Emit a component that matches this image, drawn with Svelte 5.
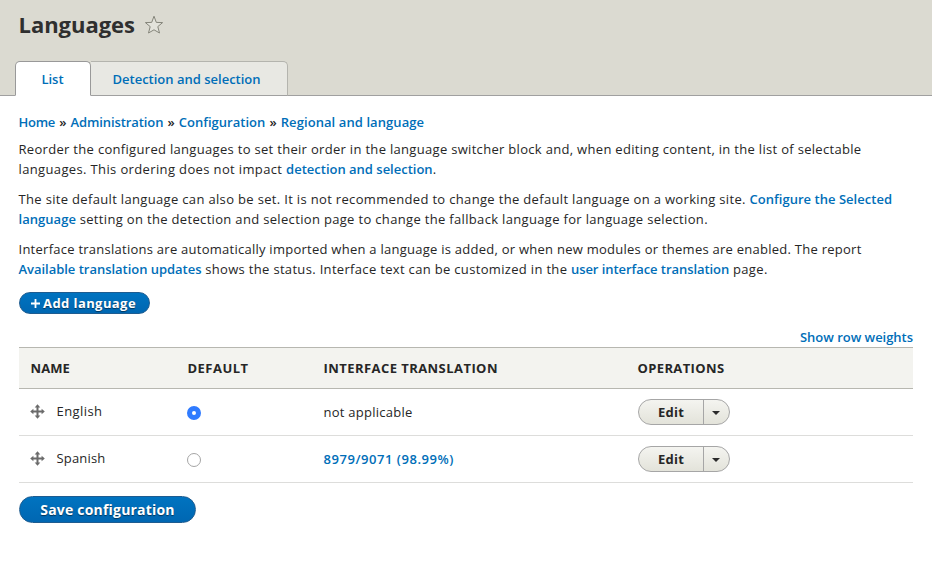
<script>
  const crumbs = [
    { text: 'Home', track: -0.274 },
    { text: 'Administration', track: -0.084 },
    { text: 'Configuration', track: 0.013 },
    { text: 'Regional and language', track: 0.083 }
  ];

  // Each paragraph is a list of lines; each line is a list of runs.
  const help = [
    [
      [{ text: 'Reorder the configured languages to set their order in the language switcher block and, when editing content, in the list of selectable', track: 0.309 }],
      [
        { text: 'languages. This ordering does not impact ', track: 0.365 },
        { text: 'detection and selection', track: -0.005, link: true },
        { text: '.', track: 0 }
      ]
    ],
    [
      [
        { text: 'The site default language can also be set. It is not recommended to change the default language on a working site. ', track: 0.332 },
        { text: 'Configure the Selected', track: 0.027, link: true }
      ],
      [
        { text: 'language', track: 0.047, link: true },
        { text: ' setting on the detection and selection page to change the fallback language for language selection.', track: 0.33 }
      ]
    ],
    [
      [{ text: 'Interface translations are automatically imported when a language is added, or when new modules or themes are enabled. The report', track: 0.255 }],
      [
        { text: 'Available translation updates', track: -0.027, link: true },
        { text: ' shows the status. Interface text can be customized in the ', track: 0.325 },
        { text: 'user interface translation', track: -0.06, link: true },
        { text: ' page.', track: 0.37 }
      ]
    ]
  ];

  const rows = [
    { name: 'English', track: 0.431, status: 'not applicable' },
    { name: 'Spanish', track: 0.182, status: '8979/9071 (98.99%)', link: true }
  ];

  let selected = $state('English');
</script>

<header>
  <div class="title">
    <h1>Languages</h1>
    <svg class="star" width="20" height="20" viewBox="0 0 20 20">
      <path d="M10 1.2 12.3 7.4 18.6 7.6 13.8 11.6 15.5 18 10 14.8 4.5 18 6.2 11.6 1.4 7.6 7.7 7.4Z" fill="#e3e3db" stroke="#85857a" stroke-linejoin="round" />
    </svg>
  </div>
  <nav class="tabs">
    <a class="tab active" href="#list">List</a>
    <a class="tab second" href="#detection">Detection and selection</a>
  </nav>
</header>

<main>
  <nav class="crumbs">
    {#each crumbs as crumb, i}
      {#if i}<span class="sep">»</span>{/if}
      <a href="#top" style="letter-spacing: {crumb.track}px">{crumb.text}</a>
    {/each}
  </nav>

  {#each help as lines}
    <p>
      {#each lines as line}
        <span class="line">{#each line as run}{#if run.link}<a href="#top" style="letter-spacing: {run.track}px">{run.text}</a>{:else}<span style="letter-spacing: {run.track}px">{run.text}</span>{/if}{/each}</span>
      {/each}
    </p>
  {/each}

  <button class="primary add">
    <svg width="9" height="9" viewBox="0 0 9 9"><path d="M4.5 0V9M0 4.5H9" stroke="#fff" stroke-width="1.8" /></svg>
    <span>Add language</span>
  </button>

  <div class="weights"><a href="#weights">Show row weights</a></div>

  <div class="table">
    <div class="row head">
      <span class="h1">Name</span>
      <span class="h2">Default</span>
      <span class="h3">Interface translation</span>
      <span class="h4">Operations</span>
    </div>
    {#each rows as row}
      <div class="row">
        <div class="name">
          <svg width="15" height="15" viewBox="0 0 15 15">
            <path d="M7.5 2V13M2 7.5H13" stroke="#6b6b6b" stroke-width="2" />
            <path d="M7.5 .2 10.3 3.4H4.7ZM7.5 14.8 10.3 11.6H4.7ZM.2 7.5 3.4 4.7V10.3ZM14.8 7.5 11.6 4.7V10.3Z" fill="#6b6b6b" />
          </svg>
          <span style="letter-spacing: {row.track}px">{row.name}</span>
        </div>
        <div class="pick">
          <button class="radio" class:on={selected === row.name} aria-label={row.name} onclick={() => (selected = row.name)}></button>
        </div>
        <div class="status">
          {#if row.link}<a href="#translate">{row.status}</a>{:else}{row.status}{/if}
        </div>
        <div class="ops">
          <div class="drop">
            <span class="edit">Edit</span>
            <span class="toggle"><svg width="8" height="4" viewBox="0 0 8 4"><path d="M0 0H8L4 4Z" fill="#2b2b2b" /></svg></span>
          </div>
        </div>
      </div>
    {/each}
  </div>

  <button class="primary save">Save configuration</button>
</main>

<style>
  :global(body) {
    background: #fff;
    color: #262626;
    font: 13px/20px 'Open Sans', 'Noto Sans', sans-serif;
  }
  header {
    box-sizing: border-box;
    height: 96px;
    padding: 10px 15px 0;
    display: flex;
    flex-direction: column;
    justify-content: space-between;
    background: #dbdad1;
    border-bottom: 1px solid #a0a0a0;
  }
  .title {
    display: flex;
    align-items: center;
    gap: 9px;
    height: 30px;
    padding-left: 4px;
  }
  h1 {
    margin: -2px 0 0 -0.5px;
    font-size: 22px;
    line-height: 30px;
    letter-spacing: -0.03px;
    color: #2f2f2f;
  }
  a {
    color: #006eb8;
    font-weight: 600;
    text-decoration: none;
  }
  .tabs {
    display: flex;
    height: 35px;
    margin-bottom: -1px;
  }
  .tab {
    box-sizing: border-box;
    border: 1px solid #b4b4ae;
    border-left: 0;
    border-bottom-color: #a0a0a0;
    border-radius: 0 5px 0 0;
    background: #e8e8e3;
    line-height: 34px;
    height: 35px;
  }
  .active {
    width: 76px;
    padding-right: 1px;
    text-align: center;
    background: #fff;
    border: 1px solid #999;
    border-bottom-color: #fff;
    border-radius: 5px 5px 0 0;
  }
  .second {
    padding: 0 26.5px 0 21.5px;
  }
  main {
    padding: 16px 19px 0 18.5px;
  }
  .crumbs {
    display: flex;
    gap: 4.2px;
    height: 20px;
    margin-bottom: 7px;
  }
  .sep {
    width: 7px;
    text-align: center;
    font-weight: 600;
  }
  p {
    margin: 0 0 10px;
  }
  .line {
    display: block;
    white-space: pre;
  }
  button {
    font-family: inherit;
    cursor: pointer;
  }
  .primary {
    box-sizing: border-box;
    display: flex;
    align-items: center;
    justify-content: center;
    padding: 0;
    border: 1px solid #1e5c90;
    border-radius: 20px;
    background: linear-gradient(#0073c0, #0067b2);
    color: #fff;
    font-weight: 700;
    text-shadow: 0 1px 1px rgba(0, 0, 0, 0.5);
  }
  .add {
    width: 131px;
    height: 22px;
    margin: 13px 0 0 0.5px;
    padding-right: 2px;
    gap: 3px;
    font-size: 13px;
    letter-spacing: 0.42px;
  }
  .save {
    width: 177px;
    height: 27px;
    margin: 13px 0 0 0.5px;
    font-size: 14px;
    letter-spacing: 0.2px;
  }
  .weights {
    height: 20px;
    margin-top: 13px;
    text-align: right;
    letter-spacing: -0.03px;
  }
  .table {
    margin-left: 0.5px;
    border-top: 1px solid #b7b7b0;
  }
  .row {
    box-sizing: border-box;
    display: grid;
    grid-template-columns: 157px 136px 314px 1fr;
    align-items: center;
    height: 47px;
    padding-left: 11.5px;
    border-bottom: 1px solid #dddddb;
  }
  .head {
    height: 41px;
    background: #f3f3ef;
    border-color: #b7b7b0;
    font-weight: 700;
    text-transform: uppercase;
  }
  .h1 {
    letter-spacing: 0.1px;
  }
  .h2 {
    letter-spacing: 0.47px;
  }
  .h3 {
    letter-spacing: 0.44px;
  }
  .h4 {
    letter-spacing: 0.37px;
  }
  .name {
    display: flex;
    align-items: center;
    gap: 11.5px;
    padding-bottom: 2px;
  }
  .name svg {
    margin-left: -0.5px;
  }
  .pick {
    display: flex;
    padding-top: 2px;
  }
  .radio {
    box-sizing: border-box;
    width: 14px;
    height: 14px;
    margin-left: -0.5px;
    padding: 0;
    border: 1px solid #a5a5a5;
    border-radius: 50%;
    background: #fff;
  }
  .on {
    border: 5px solid #2f7bff;
  }
  .status {
    letter-spacing: 0.25px;
  }
  .status a {
    letter-spacing: 0.546px;
  }
  .drop {
    box-sizing: border-box;
    display: flex;
    width: 92px;
    height: 26px;
    margin-left: 0.5px;
    border: 1px solid #a6a6a6;
    border-radius: 20px;
    background: linear-gradient(#f4f4f0, #e3e3da);
    font-weight: 700;
    line-height: 25px;
  }
  .edit {
    width: 64px;
    border-right: 1px solid #a6a6a6;
    text-align: center;
    letter-spacing: 0.22px;
  }
  .toggle {
    flex: 1;
    display: flex;
    align-items: center;
    justify-content: center;
    padding: 1px 1px 0 0;
  }
</style>
